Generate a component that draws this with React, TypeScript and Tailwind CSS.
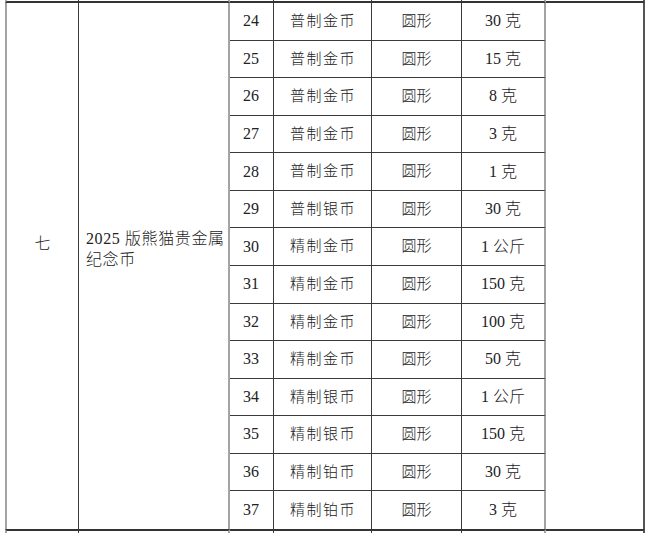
import React from "react";

const rows: [string, string, string, string][] = [
  ["24", "普制金币", "圆形", "30 克"],
  ["25", "普制金币", "圆形", "15 克"],
  ["26", "普制金币", "圆形", "8 克"],
  ["27", "普制金币", "圆形", "3 克"],
  ["28", "普制金币", "圆形", "1 克"],
  ["29", "普制银币", "圆形", "30 克"],
  ["30", "精制金币", "圆形", "1 公斤"],
  ["31", "精制金币", "圆形", "150 克"],
  ["32", "精制金币", "圆形", "100 克"],
  ["33", "精制金币", "圆形", "50 克"],
  ["34", "精制银币", "圆形", "1 公斤"],
  ["35", "精制银币", "圆形", "150 克"],
  ["36", "精制铂币", "圆形", "30 克"],
  ["37", "精制铂币", "圆形", "3 克"],
];

const stubCls = [
  "border-l-2 border-l-[#a3a3a3] border-r border-r-[#3a3a3a]",
  "border-r-2 border-r-[#a3a3a3]",
  "border-r border-r-[#3a3a3a]",
  "border-r border-r-[#3a3a3a]",
  "border-r border-r-[#3a3a3a]",
  "border-r-2 border-r-[#a3a3a3]",
  "border-r-2 border-r-[#555]",
];

const serif = "font-['Liberation_Serif','Times_New_Roman','Noto_Sans_CJK_SC',serif]";

export default function App() {
  return (
    <div className={`w-[649px] h-[533px] bg-white overflow-hidden pl-[5px] text-[#222] ${serif}`}>
      <div className="grid w-[640px] h-[533px] grid-cols-[74px_151px_44px_98px_90px_84px_99px] grid-rows-[3px_repeat(14,37.57px)_4px]">
        {stubCls.map((c, i) => (
          <div key={"t" + i} className={`${c} border-b-2 border-b-[#333]`} />
        ))}
        <div className="row-span-14 border-l-2 border-l-[#a3a3a3] border-r border-r-[#3a3a3a] flex justify-center pt-[231px] text-[16px] leading-[20px] font-light">
          七
        </div>
        <div className="row-span-14 border-r-2 border-r-[#a3a3a3] pl-[7px] pt-[225px] text-[16px] leading-[21px] tracking-[0.6px]">
          <div>
            <span className={serif}>2025 </span>
            <span className="font-light">版熊猫贵金属</span>
          </div>
          <div className="font-light">纪念币</div>
        </div>
        {rows.map((r, i) => {
          const b = i < rows.length - 1 ? "border-b border-b-[#3a3a3a]" : "";
          const [num, unit] = r[3].split(" ");
          const cells = [
            <div key={"a" + i} className={`${b} border-r border-r-[#3a3a3a] flex items-center justify-center text-[16px] pr-[1px] ${serif}`}>
              {r[0]}
            </div>,
            <div key={"b" + i} className={`${b} border-r border-r-[#3a3a3a] flex items-center justify-center text-[15px] tracking-[1.5px] font-light pl-[1px]`}>
              {r[1]}
            </div>,
            <div key={"c" + i} className={`${b} border-r border-r-[#3a3a3a] flex items-center justify-center text-[15px] font-light`}>
              {r[2]}
            </div>,
            <div key={"d" + i} className={`${b} border-r-2 border-r-[#a3a3a3] flex items-center justify-center text-[16px]`}>
              <span className={serif}>{num}&nbsp;</span>
              <span className="font-light">{unit}</span>
            </div>,
          ];
          if (i === 0) {
            cells.push(
              <div key="last" className="row-span-14 border-r-2 border-r-[#555]" />
            );
          }
          return cells;
        })}
        {stubCls.map((c, i) => (
          <div key={"bt" + i} className={`${c} border-t-2 border-t-[#333]`} />
        ))}
      </div>
    </div>
  );
}
